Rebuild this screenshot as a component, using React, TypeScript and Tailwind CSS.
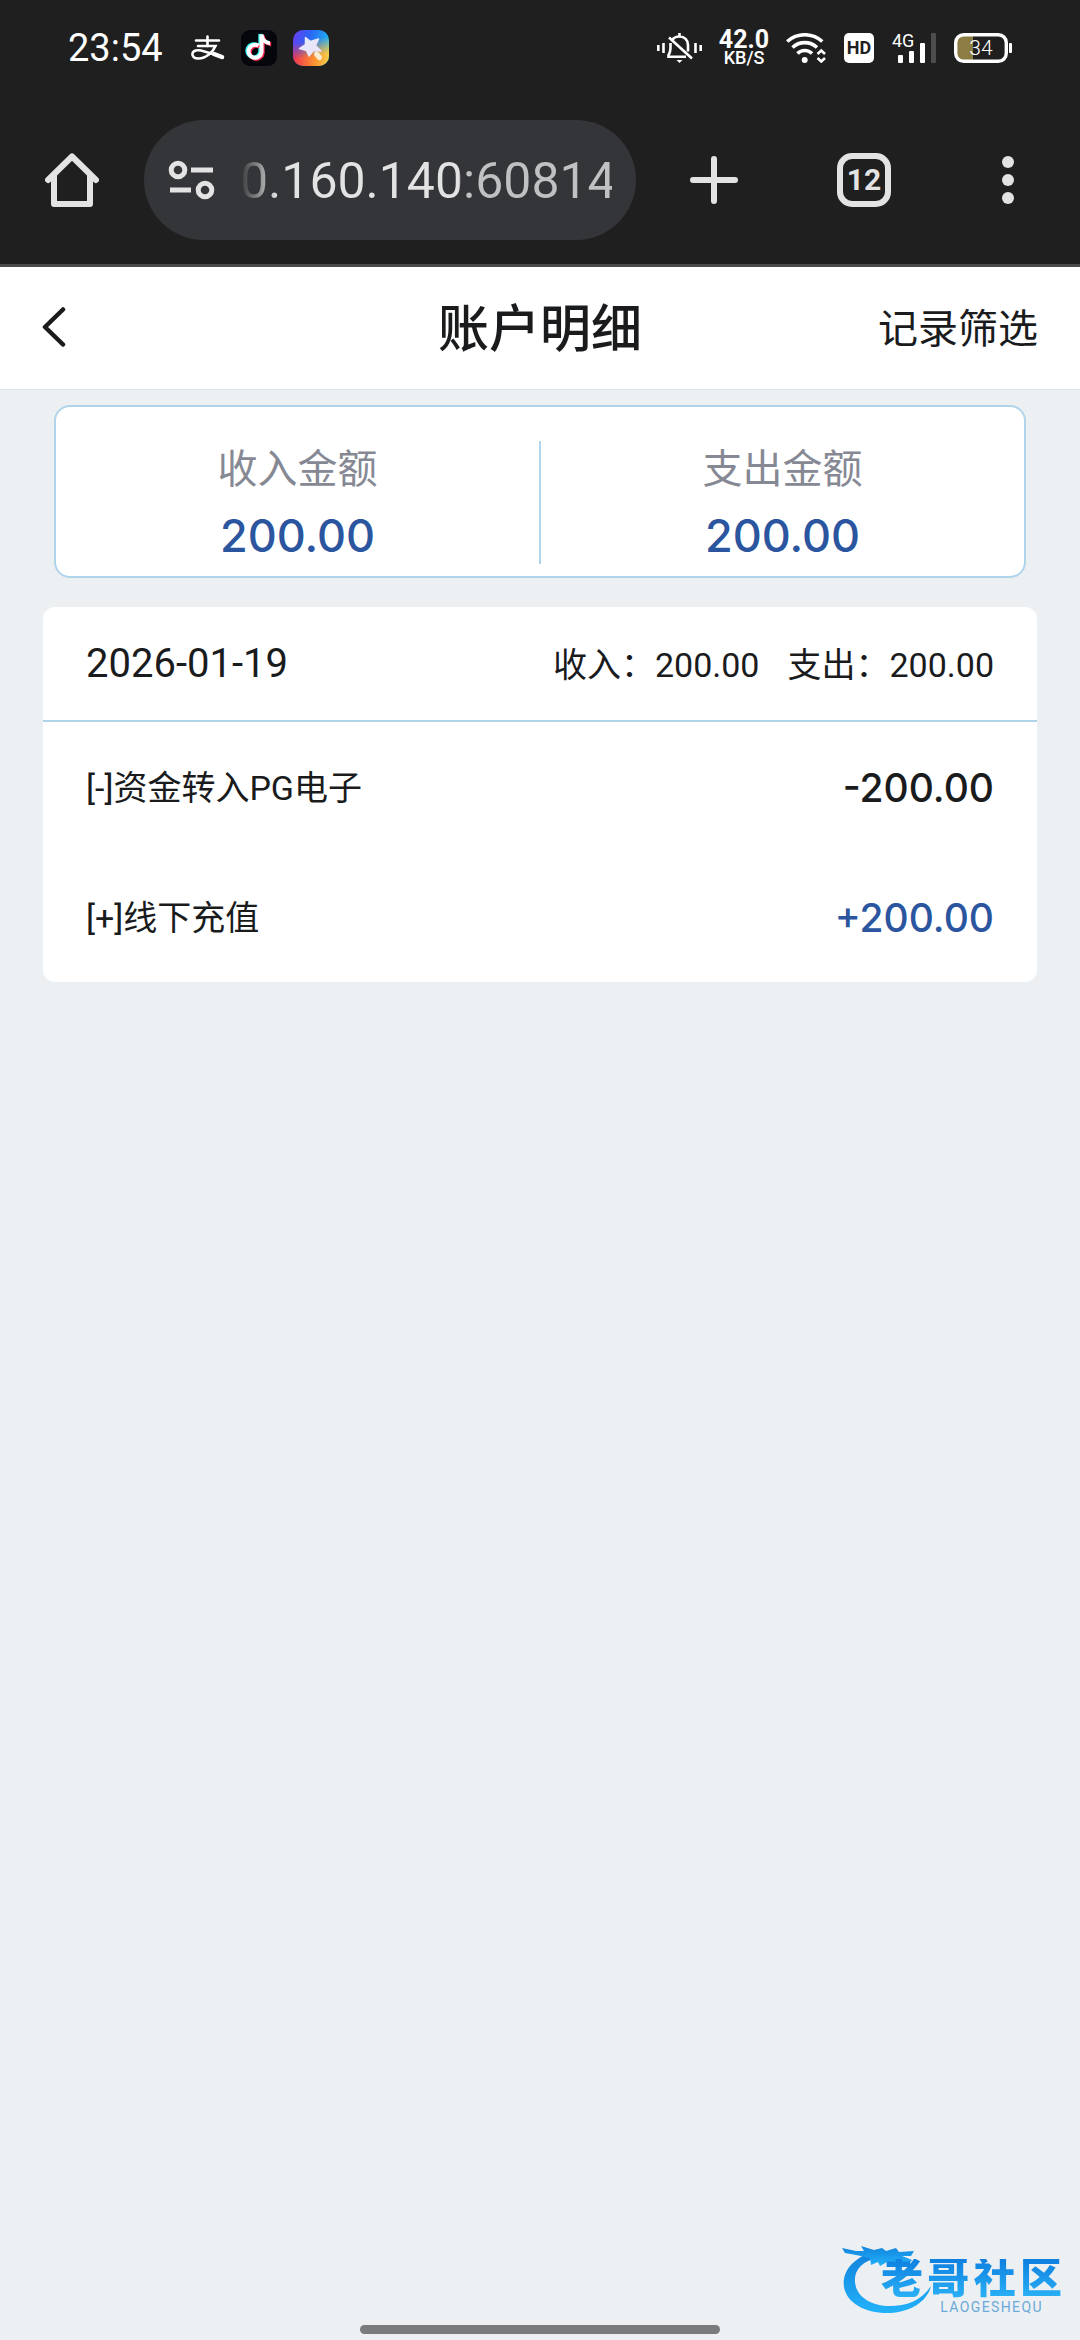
import { useState } from 'react'

interface RecordItem {
  id: number
  title: string
  amount: string
  income: boolean
}

const records: RecordItem[] = [
  { id: 1, title: '[-]资金转入PG电子', amount: '-200.00', income: false },
  { id: 2, title: '[+]线下充值', amount: '+200.00', income: true },
]

const totals = [
  { label: '收入金额', value: '200.00' },
  { label: '支出金额', value: '200.00' },
]

function StatusBar() {
  return (
    <div className="flex h-24 items-center justify-between px-[68px] text-white">
      <div className="flex items-center gap-4">
        <span className="mr-3 text-[38px] leading-none">23:54</span>
        <svg className="h-[26px] w-[34px]" viewBox="0 0 34 26" fill="none" stroke="currentColor" strokeLinecap="round">
          <path d="M5 5.500H28M16.500 1.500V11" strokeWidth="2.600" />
          <path d="M7 11H24.500C22 17 15 23.500 7.500 23.500C3 23.500 1.400 21.500 1.400 19.300C1.400 16.500 4 15 7.500 15.200C14 15.600 22 19.500 31.500 22.500" strokeWidth="2.600" />
          <path d="M23 19L31 22" strokeWidth="4.500" />
        </svg>
        <svg className="h-9 w-9" viewBox="0 0 36 36">
          <rect width="36" height="36" rx="9" fill="#05050c" />
          <g fill="none" strokeWidth="4">
            <path d="M17.500 15.800A6.500 6.500 0 1 0 20.500 22V4.500C21 9.500 24.500 13 29 13.300" stroke="#25f4ee" transform="translate(-1.200 -.6)" />
            <path d="M17.500 15.800A6.500 6.500 0 1 0 20.500 22V4.500C21 9.500 24.500 13 29 13.300" stroke="#fe2c55" transform="translate(1.200 1)" />
            <path d="M17.500 15.800A6.500 6.500 0 1 0 20.500 22V4.500C21 9.500 24.500 13 29 13.300" stroke="#fff" />
          </g>
        </svg>
        <svg className="h-9 w-9" viewBox="0 0 36 36">
          <defs>
            <linearGradient id="skyTop" x1="0" y1="0" x2="1" y2="0.3">
              <stop offset="0" stopColor="#6d3df0" />
              <stop offset="0.45" stopColor="#2b62f5" />
              <stop offset="1" stopColor="#1fb4f2" />
            </linearGradient>
            <linearGradient id="skyBottom" x1="0" y1="0" x2="1" y2="0">
              <stop offset="0" stopColor="#f0324e" />
              <stop offset="0.6" stopColor="#fb9332" />
              <stop offset="1" stopColor="#f5cf4a" />
            </linearGradient>
            <linearGradient id="skyFade" x1="0.3" y1="0" x2="0.5" y2="1">
              <stop offset="0.3" stopColor="#000" />
              <stop offset="0.75" stopColor="#fff" />
            </linearGradient>
            <mask id="skyMask">
              <rect width="36" height="36" fill="url(#skyFade)" />
            </mask>
          </defs>
          <rect width="36" height="36" rx="10" fill="url(#skyTop)" />
          <rect width="36" height="36" rx="10" fill="url(#skyBottom)" mask="url(#skyMask)" />
          <path
            d="M12.500 7.500L17.500 11.500L25.500 9L22.500 15.500L28 21L20.500 20.500L16 26L13.500 20.500L6.500 18.500L12.500 14.500Z"
            fill="#e9e6fb"
            stroke="#e9e6fb"
            strokeWidth="1.500"
            strokeLinejoin="round"
          />
          <path d="M23.500 24L26.500 27.500" stroke="#f8ecd2" strokeWidth="5" strokeLinecap="round" />
        </svg>
      </div>

      <div className="flex items-center gap-[18px]">
        <svg className="h-[30px] w-[45px]" viewBox="0 0 45 30" fill="none" stroke="currentColor" strokeWidth="2.600">
          <path d="M1.300 12V18M6.500 10V20M38.500 10V20M43.700 12V18" />
          <path d="M22.500 0V4M15.500 6.500C17 4.500 19.500 3.500 22.500 3.500C27.500 3.500 31 7 31 12V18.500M13.500 10C13.500 17 14 18.500 11.500 22V23.700H29" />
          <path d="M12 4.500L35 25.500" />
          <path d="M19.500 27H25.500L22.500 30Z" fill="currentColor" stroke="none" />
        </svg>
        <div className="flex w-12 flex-col items-center">
          <span className="text-[25px] font-bold leading-5">42.0</span>
          <span className="text-[18px] font-medium leading-4">KB/S</span>
        </div>
        <svg className="h-[30px] w-10" viewBox="0 0 40 30" fill="none" stroke="currentColor" strokeWidth="3.600">
          <path d="M1.200 8.500C11.500 -.5 26 -.5 36.300 8.500" />
          <path d="M6.500 14.500C13.500 8 24 8 31 14.500" />
          <path d="M11.500 20.500C15.500 16.500 22 16.500 26 20.500" />
          <circle cx="18.700" cy="27" r="3" fill="currentColor" stroke="none" />
          <path d="M31.500 21L35.300 17.500L39 21M31.500 25L35.300 28.500L39 25" strokeWidth="2.600" />
        </svg>
        <span className="flex h-[30px] w-[30px] items-center justify-center rounded-[5px] bg-white text-[18px] font-bold leading-none text-[#1f1f1f]">
          HD
        </span>
        <svg className="h-[30px] w-11 overflow-visible" viewBox="0 0 44 30" fill="currentColor">
          <text x="0" y="14" fontSize="18">4G</text>
          <rect x="6" y="22" width="5" height="8" rx="1" />
          <rect x="17" y="18" width="5" height="12" rx="1" />
          <rect x="28" y="10" width="5" height="20" rx="1" />
          <rect x="39" y="0" width="5" height="30" rx="1" fill="#4d4d4d" />
        </svg>
        <svg className="h-[30px] w-[58px]" viewBox="0 0 58 30">
          <path d="M9 2H19V28H9Q2 28 2 21V9Q2 2 9 2Z" fill="#8c7d45" />
          <rect x="1.700" y="1.700" width="50.600" height="26.600" rx="8" fill="none" stroke="currentColor" strokeWidth="3.400" />
          <rect x="55" y="10" width="3" height="10" rx="1" fill="currentColor" />
          <text x="27" y="22" fontSize="21" textAnchor="middle" fill="currentColor" fontWeight="300">34</text>
        </svg>
      </div>
    </div>
  )
}

function BrowserBar() {
  const [url, setUrl] = useState('0.160.140:60814')

  return (
    <div className="flex h-[171px] items-center border-b-[3px] border-[#4a4a4a] text-[#e3e3e3]">
      <button aria-label="主页" className="flex w-36 justify-center">
        <svg className="h-[54px] w-[54px]" viewBox="0 0 54 54" fill="none" stroke="currentColor" strokeWidth="6" strokeLinecap="round" strokeLinejoin="round">
          <path d="M3 27L27 3.500L51 27" />
          <path d="M9 22V51H45V22" />
        </svg>
      </button>
      <div className="flex h-[120px] min-w-0 flex-1 items-center gap-6 rounded-full bg-[#343538] pl-6 pr-6">
        <svg className="h-[40px] w-[48px] shrink-0" viewBox="0 0 48 40" fill="none" stroke="currentColor" strokeWidth="5">
          <circle cx="10" cy="10" r="6.800" />
          <path d="M23 10H45M2 30H23" />
          <circle cx="37" cy="30" r="6.800" />
        </svg>
        <input
          aria-label="网址"
          value={url}
          onChange={(e) => setUrl(e.target.value)}
          className="h-[72px] min-w-0 flex-1 bg-[linear-gradient(90deg,#343538_0%,#e3e3e3_10%,#e3e3e3_59%,#c0c1c3_59%)] bg-clip-text pt-[2px] text-[50px] leading-none text-transparent outline-none"
        />
      </div>
      <button aria-label="新标签页" className="flex w-[156px] justify-center">
        <svg className="h-12 w-12" viewBox="0 0 48 48" stroke="currentColor" strokeWidth="6" strokeLinecap="round">
          <path d="M24 3V45M3 24H45" />
        </svg>
      </button>
      <button aria-label="切换标签页" className="flex w-36 justify-center">
        <span className="flex h-[54px] w-[54px] items-center justify-center rounded-[15px] border-[6px] border-[#e3e3e3] text-[30px] font-bold leading-none">
          12
        </span>
      </button>
      <button aria-label="更多" className="flex w-36 justify-center">
        <svg className="h-12 w-3" viewBox="0 0 12 48" fill="currentColor">
          <circle cx="6" cy="6" r="6" />
          <circle cx="6" cy="24" r="6" />
          <circle cx="6" cy="42" r="6" />
        </svg>
      </button>
    </div>
  )
}

function Watermark() {
  return (
    <div className="absolute bottom-[26px] right-[18px] h-[70px] w-[220px]">
      <svg className="h-[70px] w-[90px]" viewBox="0 0 90 70">
        <defs>
          <linearGradient id="dragon" x1="0" y1="0" x2="0" y2="1">
            <stop offset="0" stopColor="#1283dc" />
            <stop offset="1" stopColor="#22b2fa" />
          </linearGradient>
        </defs>
        <g fill="url(#dragon)">
          <path d="M28 9C8 16 0 30 2 43C5 60 25 70 48 69C68 68 85 58 89 42C79 57 64 62 48 62C28 62 14 52 13 38C12 26 20 17 36 14Z" />
          <path d="M0 4L14 7L22 7L19 2L32 6L40 4L44 7L54 4L57 8L72 7L69 12L60 12L70 16L67 20L54 17L48 21L45 18L38 22L36 18L29 21L28 14L14 11L3 9Z" />
        </g>
      </svg>
      <div className="absolute right-0 top-[15px] flex w-[181px] justify-between bg-gradient-to-b from-[#0f7fe0] to-[#2bb2f6] bg-clip-text text-[42px] font-black leading-10 text-transparent">
        <span>老</span>
        <span>哥</span>
        <span>社</span>
        <span>区</span>
      </div>
      <span className="absolute bottom-0 right-[19px] text-[14px] leading-none tracking-widest text-[#6aa9da]">LAOGESHEQU</span>
    </div>
  )
}

export default function App() {
  return (
    <div className="relative flex min-h-screen flex-col bg-[#ecf0f3] font-['Roboto','Noto_Sans_CJK_SC',sans-serif] text-[#1a1b1d]">
      <div className="bg-[#1f1f1f]">
        <StatusBar />
        <BrowserBar />
      </div>

      {/* Header */}
      <header className="grid h-[123px] grid-cols-3 items-center border-b border-[#e2e5e8] bg-white px-[42px]">
        <button aria-label="返回" className="justify-self-start">
          <svg className="h-[42px] w-6" viewBox="0 0 24 42" fill="none" stroke="currentColor" strokeWidth="4.500" strokeLinecap="round" strokeLinejoin="round">
            <path d="M21 2.500L3 20L21 37.500" />
          </svg>
        </button>
        <h1 className="pt-1 text-center text-[51px] font-medium leading-[60px]">账户明细</h1>
        <button className="justify-self-end pt-1 text-[40px] leading-[60px]">记录筛选</button>
      </header>

      <main className="flex-1">
        {/* Totals */}
        <section className="mx-[54px] mt-[15px] flex h-[173px] rounded-2xl border-2 border-[#b0d4ea] bg-white pb-3 pt-[34px]">
          {totals.map((t, i) => (
            <div key={t.label} className={i === 0 ? 'flex-1 border-r-2 border-[#b0d4ea] text-center' : 'flex-1 text-center'}>
              <p className="text-[40px] leading-[58px] text-[#868994]">{t.label}</p>
              <p className="font-['Inter',sans-serif] text-[45px] font-medium leading-[74px] text-[#2b569f]">{t.value}</p>
            </div>
          ))}
        </section>

        {/* Daily records */}
        <section className="mx-[43px] mt-[29px] rounded-xl bg-white">
          <div className="flex h-[115px] items-center justify-between border-b-2 border-[#b0d4ea] px-[43px]">
            <h2 className="text-[40px] leading-[58px]">2026-01-19</h2>
            <div className="flex gap-7 pt-[2px] text-[34px] leading-[58px]">
              <span>收入：200.00</span>
              <span>支出：200.00</span>
            </div>
          </div>
          <ul>
            {records.map((r) => (
              <li key={r.id} className="flex h-[130px] items-center justify-between px-[43px] pt-[2px]">
                <span className="text-[34px] leading-[58px]">{r.title}</span>
                <span className={`font-['Inter',sans-serif] text-[39px] font-medium leading-[58px] ${r.income ? 'text-[#2b569f]' : ''}`}>
                  {r.amount}
                </span>
              </li>
            ))}
          </ul>
        </section>
      </main>

      <Watermark />

      {/* Gesture handle */}
      <div className="flex justify-center pb-[6px]">
        <div className="h-[9px] w-1/3 rounded-full bg-[#797b7c]" />
      </div>
    </div>
  )
}
